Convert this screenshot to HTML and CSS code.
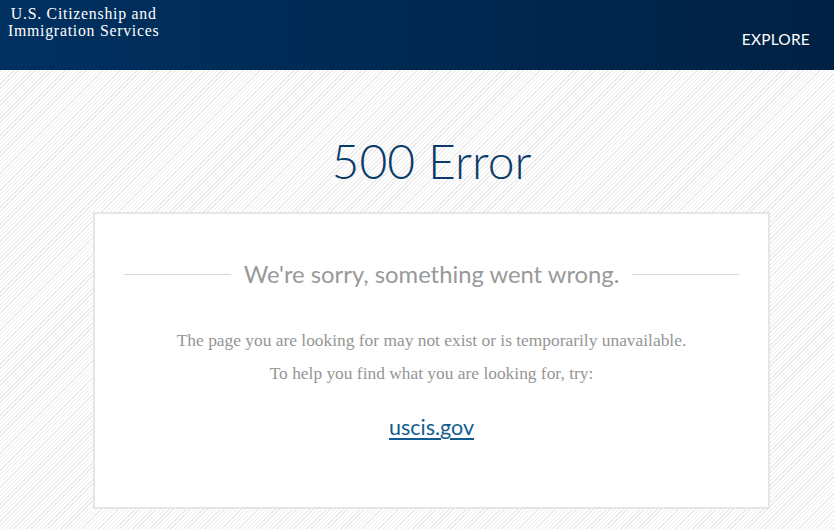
FILE: index.html
```html
<!DOCTYPE html>
<html lang="en">
  <head>
    <meta charset="UTF-8" />
    <meta name="viewport" content="width=device-width, initial-scale=1.0" />
    <title>500 Error | USCIS</title>
    <link rel="stylesheet" href="styles.css">
  </head>
  <body>
    <header class="site-header">
      <a class="site-logo" href="#">U.S. Citizenship and<br />Immigration Services</a>
      <nav class="site-nav">
        <a href="#">EXPLORE</a>
      </nav>
    </header>

    <main class="page">
      <h1 class="page-title">500 Error</h1>

      <div class="error-card">
        <h2 class="error-heading"><span>We're sorry, something went wrong.</span></h2>
        <p>The page you are looking for may not exist or is temporarily unavailable.</p>
        <p>To help you find what you are looking for, try:</p>
        <a class="error-link" href="#">uscis.gov</a>
      </div>
    </main>
  </body>
</html>
```

FILE: styles.css
```css
html,
body {
  margin: 0;
  padding: 0;
}
body {
  font-family: "Lato", "Liberation Sans", sans-serif;
  background-color: #fff;
  background-image: repeating-linear-gradient(
    -45deg,
    #fff 0,
    #fff 2px,
    #ebebeb 2px,
    #ebebeb 3px
  );
  min-height: 529px;
}
.site-header {
  height: 70px;
  background: linear-gradient(90deg, #013161 0%, #00274f 60%, #002143 100%);
  display: flex;
  justify-content: space-between;
  color: #fff;
}
.site-logo {
  display: block;
  padding: 5px 0 0 8px;
  font-family: "Liberation Serif", "DejaVu Serif", serif;
  font-size: 15.8px;
  line-height: 17px;
  letter-spacing: 0.75px;
  text-align: center;
  color: #fff;
  text-decoration: none;
}
.site-nav {
  padding: 29px 24px 0 0;
}
.site-nav a {
  color: #fff;
  text-decoration: none;
  font-size: 15.5px;
  letter-spacing: 0.2px;
}
.page {
  width: 677px;
  margin-left: 93px;
  padding-bottom: 22px;
}
.page-title {
  margin: 0;
  padding: 62px 0 22px;
  text-align: center;
  font-weight: 300;
  font-size: 48px;
  line-height: 58px;
  color: #0b3b6b;
}
.error-card {
  background: #fff;
  border: 2px solid #e6e6e6;
  padding: 44px 29px 67px;
  text-align: center;
}
.error-heading {
  display: flex;
  align-items: center;
  gap: 13px;
  margin: 0 0 40px;
  font-weight: 400;
  font-size: 23.8px;
  line-height: 32px;
  color: #999;
}
.error-heading::before,
.error-heading::after {
  content: "";
  flex: 1;
  border-top: 1px solid #d6d6d6;
}
.error-card p {
  margin: 0 0 13px;
  font-family: "Liberation Serif", "DejaVu Serif", serif;
  font-size: 17.4px;
  line-height: 20px;
  color: #959595;
}
.error-link {
  display: inline-block;
  margin-top: 18px;
  font-size: 21.5px;
  color: #0f5d90;
  text-decoration-thickness: 2px;
  text-underline-offset: 3px;
}
```
